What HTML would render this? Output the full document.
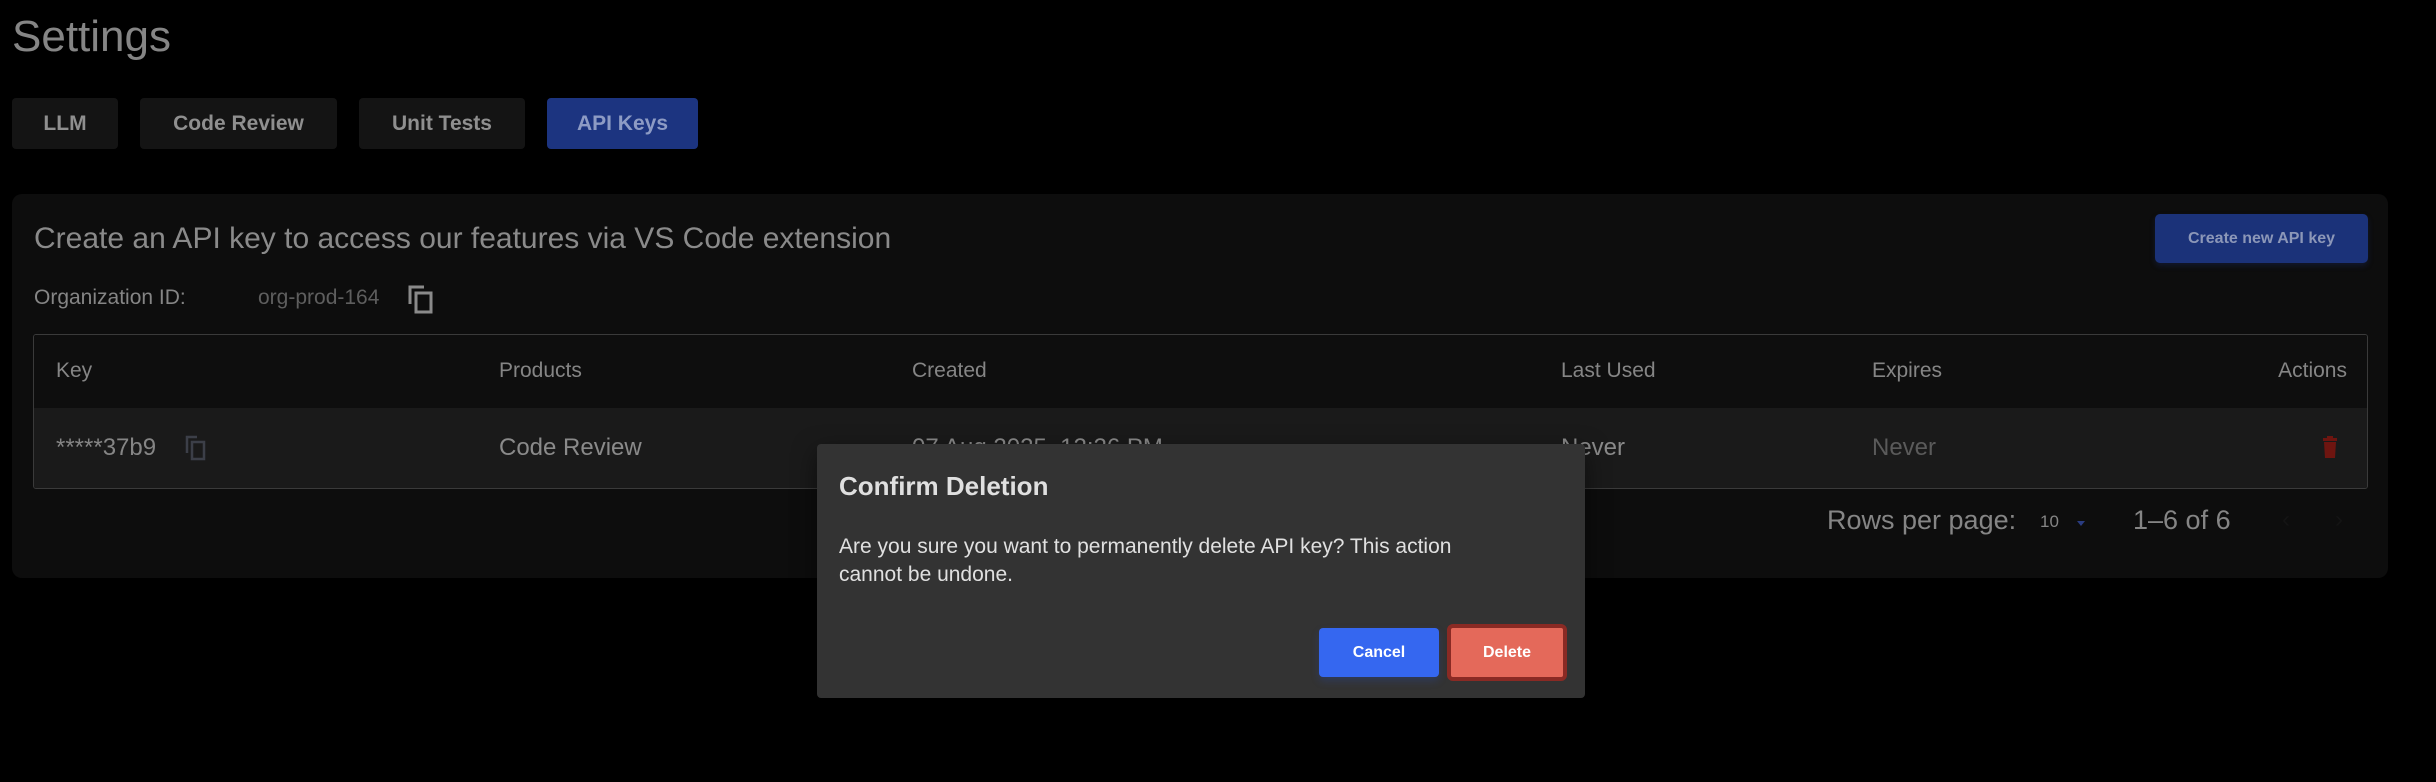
<!DOCTYPE html>
<html><head><meta charset="utf-8"><style>
*{margin:0;padding:0;box-sizing:border-box}
body{width:2436px;height:782px;background:#000;font-family:"Liberation Sans",sans-serif;position:relative;overflow:hidden;color:#8f8f8f}
.a{position:absolute;white-space:nowrap}
.tab{position:absolute;top:98px;height:51px;background:#141414;border-radius:4px;color:#8f8f8f;font-size:21px;font-weight:bold;display:flex;align-items:center;justify-content:center}
.card{position:absolute;left:12px;top:194px;width:2376px;height:384px;background:#0d0d0d;border-radius:10px}
.tbl{position:absolute;left:33px;top:334px;width:2335px;height:155px;border:1.5px solid #3a3a3a;border-radius:3px;overflow:hidden}
.hr{position:absolute;left:0;top:0;width:100%;height:73px;background:#0e0e0e}
.rw{position:absolute;left:0;top:73px;width:100%;height:81px;background:#1a1a1a}
.th{font-size:21px;color:#858585;top:24px}
.td{font-size:24px;color:#8a8a8a;top:26px}
</style></head><body>
<div class="a" style="left:12px;top:12px;font-size:44px;color:#858585">Settings</div>
<div class="tab" style="left:12px;width:106px">LLM</div>
<div class="tab" style="left:140px;width:197px">Code Review</div>
<div class="tab" style="left:359px;width:166px">Unit Tests</div>
<div class="tab" style="left:547px;width:151px;background:#1c3480;color:#8d9bc4">API Keys</div>

<div class="card"></div>
<div class="a" style="left:34px;top:222px;font-size:30px;color:#8a8a8a">Create an API key to access our features via VS Code extension</div>
<div class="a" style="left:2155px;top:214px;width:213px;height:49px;background:#1b3279;border-radius:5px;color:#8c97b8;font-size:16px;font-weight:bold;display:flex;align-items:center;justify-content:center;box-shadow:0 3px 6px rgba(30,50,120,.3)">Create new API key</div>
<div class="a" style="left:34px;top:286px;font-size:21px;color:#858585">Organization ID:</div>
<div class="a" style="left:258px;top:286px;font-size:21px;color:#5e5e5e">org-prod-164</div>
<svg class="a" style="left:407px;top:284px" width="28" height="30" viewBox="0 0 28 30"><path d="M3 20V3h14" fill="none" stroke="#8a8a8a" stroke-width="3"/><rect x="9" y="9" width="15" height="19" fill="none" stroke="#8a8a8a" stroke-width="3"/></svg>

<div class="tbl">
 <div class="hr">
  <div class="a th" style="left:22px">Key</div>
  <div class="a th" style="left:465px">Products</div>
  <div class="a th" style="left:878px">Created</div>
  <div class="a th" style="left:1527px">Last Used</div>
  <div class="a th" style="left:1838px">Expires</div>
  <div class="a th" style="right:20px">Actions</div>
 </div>
 <div class="rw">
  <div class="a td" style="left:22px;color:#858585">*****37b9</div>
  <svg class="a" style="left:151px;top:27px" width="22" height="26" viewBox="0 0 22 26"><path d="M2 18V2h10" fill="none" stroke="#3c3f48" stroke-width="2.5"/><rect x="7" y="7" width="12" height="17" fill="none" stroke="#3c3f48" stroke-width="2.5"/></svg>
  <div class="a td" style="left:465px">Code Review</div>
  <div class="a td" style="left:878px">07 Aug 2025, 12:26 PM</div>
  <div class="a td" style="left:1527px">Never</div>
  <div class="a td" style="left:1838px;color:#5a5a5a">Never</div>
  <svg class="a" style="left:2288px;top:28px" width="16" height="22" viewBox="0 0 16 22"><rect x="1" y="2" width="14" height="3" fill="#6e1510"/><rect x="5" y="0" width="6" height="3" fill="#6e1510"/><path d="M2 6h12l-1 16H3z" fill="#6e1510"/></svg>
 </div>
</div>

<div class="a" style="left:1827px;top:505px;font-size:27px;color:#858585">Rows per page:</div>
<div class="a" style="left:2040px;top:512px;font-size:17px;color:#858585">10</div>
<div class="a" style="left:2077px;top:521px;width:0;height:0;border-left:4px solid transparent;border-right:4px solid transparent;border-top:5px solid #2a3c80"></div>
<div class="a" style="left:2133px;top:505px;font-size:27px;color:#858585">1–6 of 6</div>
<div class="a" style="left:2282px;top:506px;font-size:24px;color:#141414">‹</div>
<div class="a" style="left:2335px;top:506px;font-size:24px;color:#141414">›</div>

<div class="a" style="left:817px;top:444px;width:768px;height:254px;background:#333;border-radius:4px;box-shadow:0 8px 24px rgba(0,0,0,.5)"></div>
<div class="a" style="left:839px;top:471px;font-size:26px;font-weight:bold;color:#e0e0e0">Confirm Deletion</div>
<div class="a" style="left:839px;top:533px;font-size:21px;line-height:28px;color:#e0e0e0;white-space:normal;width:680px">Are you sure you want to permanently delete API key? This action cannot be undone.</div>
<div class="a" style="left:1319px;top:628px;width:120px;height:49px;background:#3567f0;border-radius:4px;color:#fff;font-size:16px;font-weight:bold;display:flex;align-items:center;justify-content:center;box-shadow:0 4px 8px rgba(40,80,200,.25)">Cancel</div>
<div class="a" style="left:1447px;top:624px;width:120px;height:57px;background:#e4695a;border:4px solid #8a2a24;border-radius:6px;color:#fff;font-size:16px;font-weight:bold;display:flex;align-items:center;justify-content:center">Delete</div>
</body></html>
